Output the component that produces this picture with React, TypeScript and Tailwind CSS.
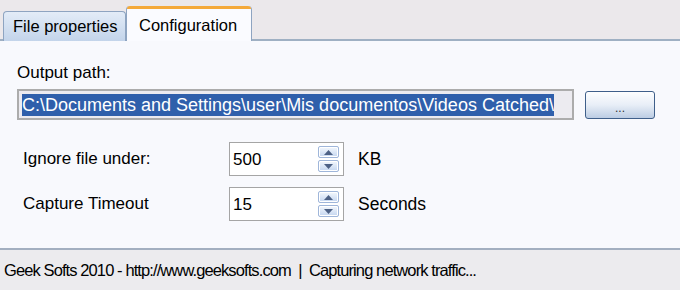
import React from "react";

function SpinBtn({ up }: { up: boolean }) {
  return (
    <div className="flex h-[12px] w-[21px] items-center justify-center rounded-[2px] border border-[#9fb6da] bg-gradient-to-b from-[#f4f8fd] to-[#c4d6f0] shadow-[inset_0_0_0_1px_#ffffff]">
      <svg width="9" height="5" viewBox="0 0 9 5">
        <path d={up ? "M0 5 L4.5 0 L9 5 Z" : "M0 0 L4.5 5 L9 0 Z"} fill="#4d6185" />
      </svg>
    </div>
  );
}

function Spin({ value }: { value: string }) {
  return (
    <div className="flex h-[34px] w-[115px] items-center border border-[#a5a5a5] bg-white pl-[3px] pr-[4px]">
      <span className="flex-1 text-[17px] leading-none text-black">{value}</span>
      <div className="flex flex-col gap-[2px]">
        <SpinBtn up />
        <SpinBtn up={false} />
      </div>
    </div>
  );
}

export default function App() {
  return (
    <div className="flex h-[290px] w-[680px] flex-col bg-[#ebe8eb] font-['Liberation_Sans',Arial,sans-serif] text-black">
      {/* tab strip */}
      <div className="flex h-[41px] items-end border-b-[2px] border-[#9fb0c3] pl-[3px]">
        <div className="mb-[-2px] flex h-[30px] w-[123px] items-center rounded-t-[4px] border border-b-0 border-[#8ea4c1] bg-gradient-to-b from-[#e3ecf8] to-[#c3d4ea] pl-[9px] text-[16.5px]">
          File properties
        </div>
        <div className="mb-[-2px] flex h-[35px] w-[126px] flex-col rounded-t-[4px] border-x border-[#8ea4c1] bg-[#fafbff]">
          <div className="h-[3px] rounded-t-[3px] bg-[#f4a93a]" />
          <div className="flex flex-1 items-center pl-[12px] text-[16.5px]">Configuration</div>
        </div>
      </div>
      {/* content */}
      <div className="flex flex-1 flex-col bg-[#f8f9fd] pl-[17px] pt-[23px]">
        <div className="text-[17px] leading-none">Output path:</div>
        <div className="mt-[8px] flex items-center">
          <div className="flex h-[31px] w-[557px] items-center overflow-hidden border-[2px] border-[#acacac] bg-[#ecebf0] pl-[3px]">
            <span className="whitespace-nowrap bg-[#2f5fab] text-[18px] leading-[22px] text-white">
              C:\Documents and Settings\user\Mis documentos\Videos Catched\
            </span>
          </div>
          <button className="ml-[11px] flex h-[28px] w-[70px] items-end justify-center rounded-[3px] border border-[#3f5f8a] bg-gradient-to-b from-[#fdfeff] via-[#e8eef7] to-[#bccde3] pb-[4px] text-[12px] leading-none text-[#333]">
            ...
          </button>
        </div>
        <div className="mt-[22px] flex items-center pl-[6px]">
          <div className="w-[206px] text-[17px]">Ignore file under:</div>
          <Spin value="500" />
          <div className="ml-[14px] text-[17.5px]">KB</div>
        </div>
        <div className="mt-[11px] flex items-center pl-[6px]">
          <div className="w-[206px] text-[17px]">Capture Timeout</div>
          <Spin value="15" />
          <div className="ml-[14px] text-[17.5px]">Seconds</div>
        </div>
      </div>
      {/* status bar */}
      <div className="flex h-[42px] items-center border-t-[2px] border-[#a3afc0] bg-[#ecebee] pl-[4px] text-[16.5px] tracking-[-0.9px]">
        <span className="whitespace-pre">Geek Softs 2010 - http://www.geeksofts.com  |  Capturing network traffic...</span>
      </div>
    </div>
  );
}
